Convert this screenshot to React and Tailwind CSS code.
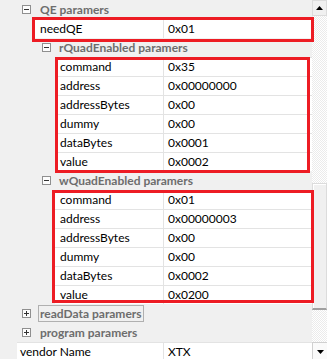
import React from "react";

function Toggle({ open }) {
  return (
    <svg width="9" height="9" viewBox="0 0 9 9" className="shrink-0">
      <rect x="0.5" y="0.5" width="8" height="8" fill="#fcfcfc" stroke="#8f8f8f" />
      <line x1="2" y1="4.5" x2="7" y2="4.5" stroke="#333" />
      {!open && <line x1="4.5" y1="2" x2="4.5" y2="7" stroke="#333" />}
    </svg>
  );
}

function Category({ level, label, open = true, focused = false }) {
  return (
    <div className={`flex h-[19px] items-center ${level === 0 ? "pl-[22px]" : "pl-[42px]"}`}>
      <Toggle open={open} />
      <span
        className={`text-[12px] font-bold leading-[15px] text-[#6d6d6d] ${
          focused ? "ml-[7px] border border-[#b0b0b0] px-px" : level === 0 ? "ml-[9px]" : "ml-[8px]"
        }`}
      >
        {label}
      </span>
    </div>
  );
}

function Prop({ level, name, value }) {
  const gutter = level === 0 ? "pl-[17px]" : level === 1 ? "pl-[35px]" : "pl-[55px]";
  const pad = level === 0 ? "pl-[3px]" : "pl-[5px]";
  return (
    <div className="grid h-[19px] grid-cols-[163px_1fr] text-[12px] text-black">
      <div className={gutter}>
        <div className={`flex h-full items-center border-t border-[#e3e3e3] bg-white ${pad}`}>{name}</div>
      </div>
      <div className="flex items-center border-l border-t border-[#e3e3e3] bg-white pl-[4px]">{value}</div>
    </div>
  );
}

const rQuad = [
  ["command", "0x35"],
  ["address", "0x00000000"],
  ["addressBytes", "0x00"],
  ["dummy", "0x00"],
  ["dataBytes", "0x0001"],
  ["value", "0x0002"],
];

const wQuad = [
  ["command", "0x01"],
  ["address", "0x00000003"],
  ["addressBytes", "0x00"],
  ["dummy", "0x00"],
  ["dataBytes", "0x0002"],
  ["value", "0x0200"],
];

function Scrollbar() {
  return (
    <div className="flex w-[15px] flex-col">
      {/* up arrow */}
      <div className="flex h-[16px] items-center justify-center border border-[#dcdcdc] bg-[#f0f0f0]">
        <svg width="7" height="4" viewBox="0 0 7 4">
          <polygon points="0,4 7,4 3.5,0" fill="#000" />
        </svg>
      </div>
      <div className="h-[167px] bg-[repeating-conic-gradient(#ffffff_0_25%,#ebebeb_0_50%)] bg-[length:2px_2px]" />
      <div className="h-[127px] border-x border-t border-b-2 border-x-[#dcdcdc] border-t-[#dcdcdc] border-b-[#a0a0a0] bg-[#f0f0f0]">
        <div className="h-full border-l border-t border-white" />
      </div>
      <div className="flex-1 bg-[repeating-conic-gradient(#ffffff_0_25%,#ebebeb_0_50%)] bg-[length:2px_2px]" />
    </div>
  );
}

export default function App() {
  return (
    <div className="relative h-[359px] w-[327px] overflow-hidden bg-[#f0f0f0] font-['Lato','Open_Sans',sans-serif]">
      <div className="flex h-[342px]">
        <div className="w-[312px]">
          <Category level={0} label="QE paramers" />
          <Prop level={1} name="needQE" value="0x01" />
          <Category level={1} label="rQuadEnabled paramers" />
          {rQuad.map(([n, v]) => (
            <Prop key={"r" + n} level={2} name={n} value={v} />
          ))}
          <Category level={1} label="wQuadEnabled paramers" />
          {wQuad.map(([n, v]) => (
            <Prop key={"w" + n} level={2} name={n} value={v} />
          ))}
          <Category level={0} label="readData paramers" open={false} focused />
          <Category level={0} label="program paramers" open={false} />
        </div>
        <Scrollbar />
      </div>

      {/* vendor row */}
      <div className="grid h-[19px] grid-cols-[163px_1fr_15px] text-[12px] text-black">
        <div className="pl-[17px]">
          <div className="flex h-full items-center border-t border-[#e3e3e3] bg-white pl-[3px]">vendor Name</div>
        </div>
        <div className="flex items-center border-l border-t border-[#e3e3e3] bg-white pl-[4px]">XTX</div>
        <div className="flex items-center justify-center border-l border-t border-[#d0d0d0] bg-[#fafafa]">
          <svg width="7" height="4" viewBox="0 0 7 4">
            <polygon points="0,0 7,0 3.5,4" fill="#000" />
          </svg>
        </div>
      </div>

      {/* red annotation boxes */}
      <div className="absolute left-[32px] top-[17px] h-[25px] w-[282px] border-[3px] border-[#ed1c24]" />
      <div className="absolute left-[55px] top-[57px] h-[116px] w-[255px] border-[3px] border-[#ed1c24]" />
      <div className="absolute left-[52px] top-[190px] h-[113px] w-[262px] border-[3px] border-[#ed1c24]" />
    </div>
  );
}
